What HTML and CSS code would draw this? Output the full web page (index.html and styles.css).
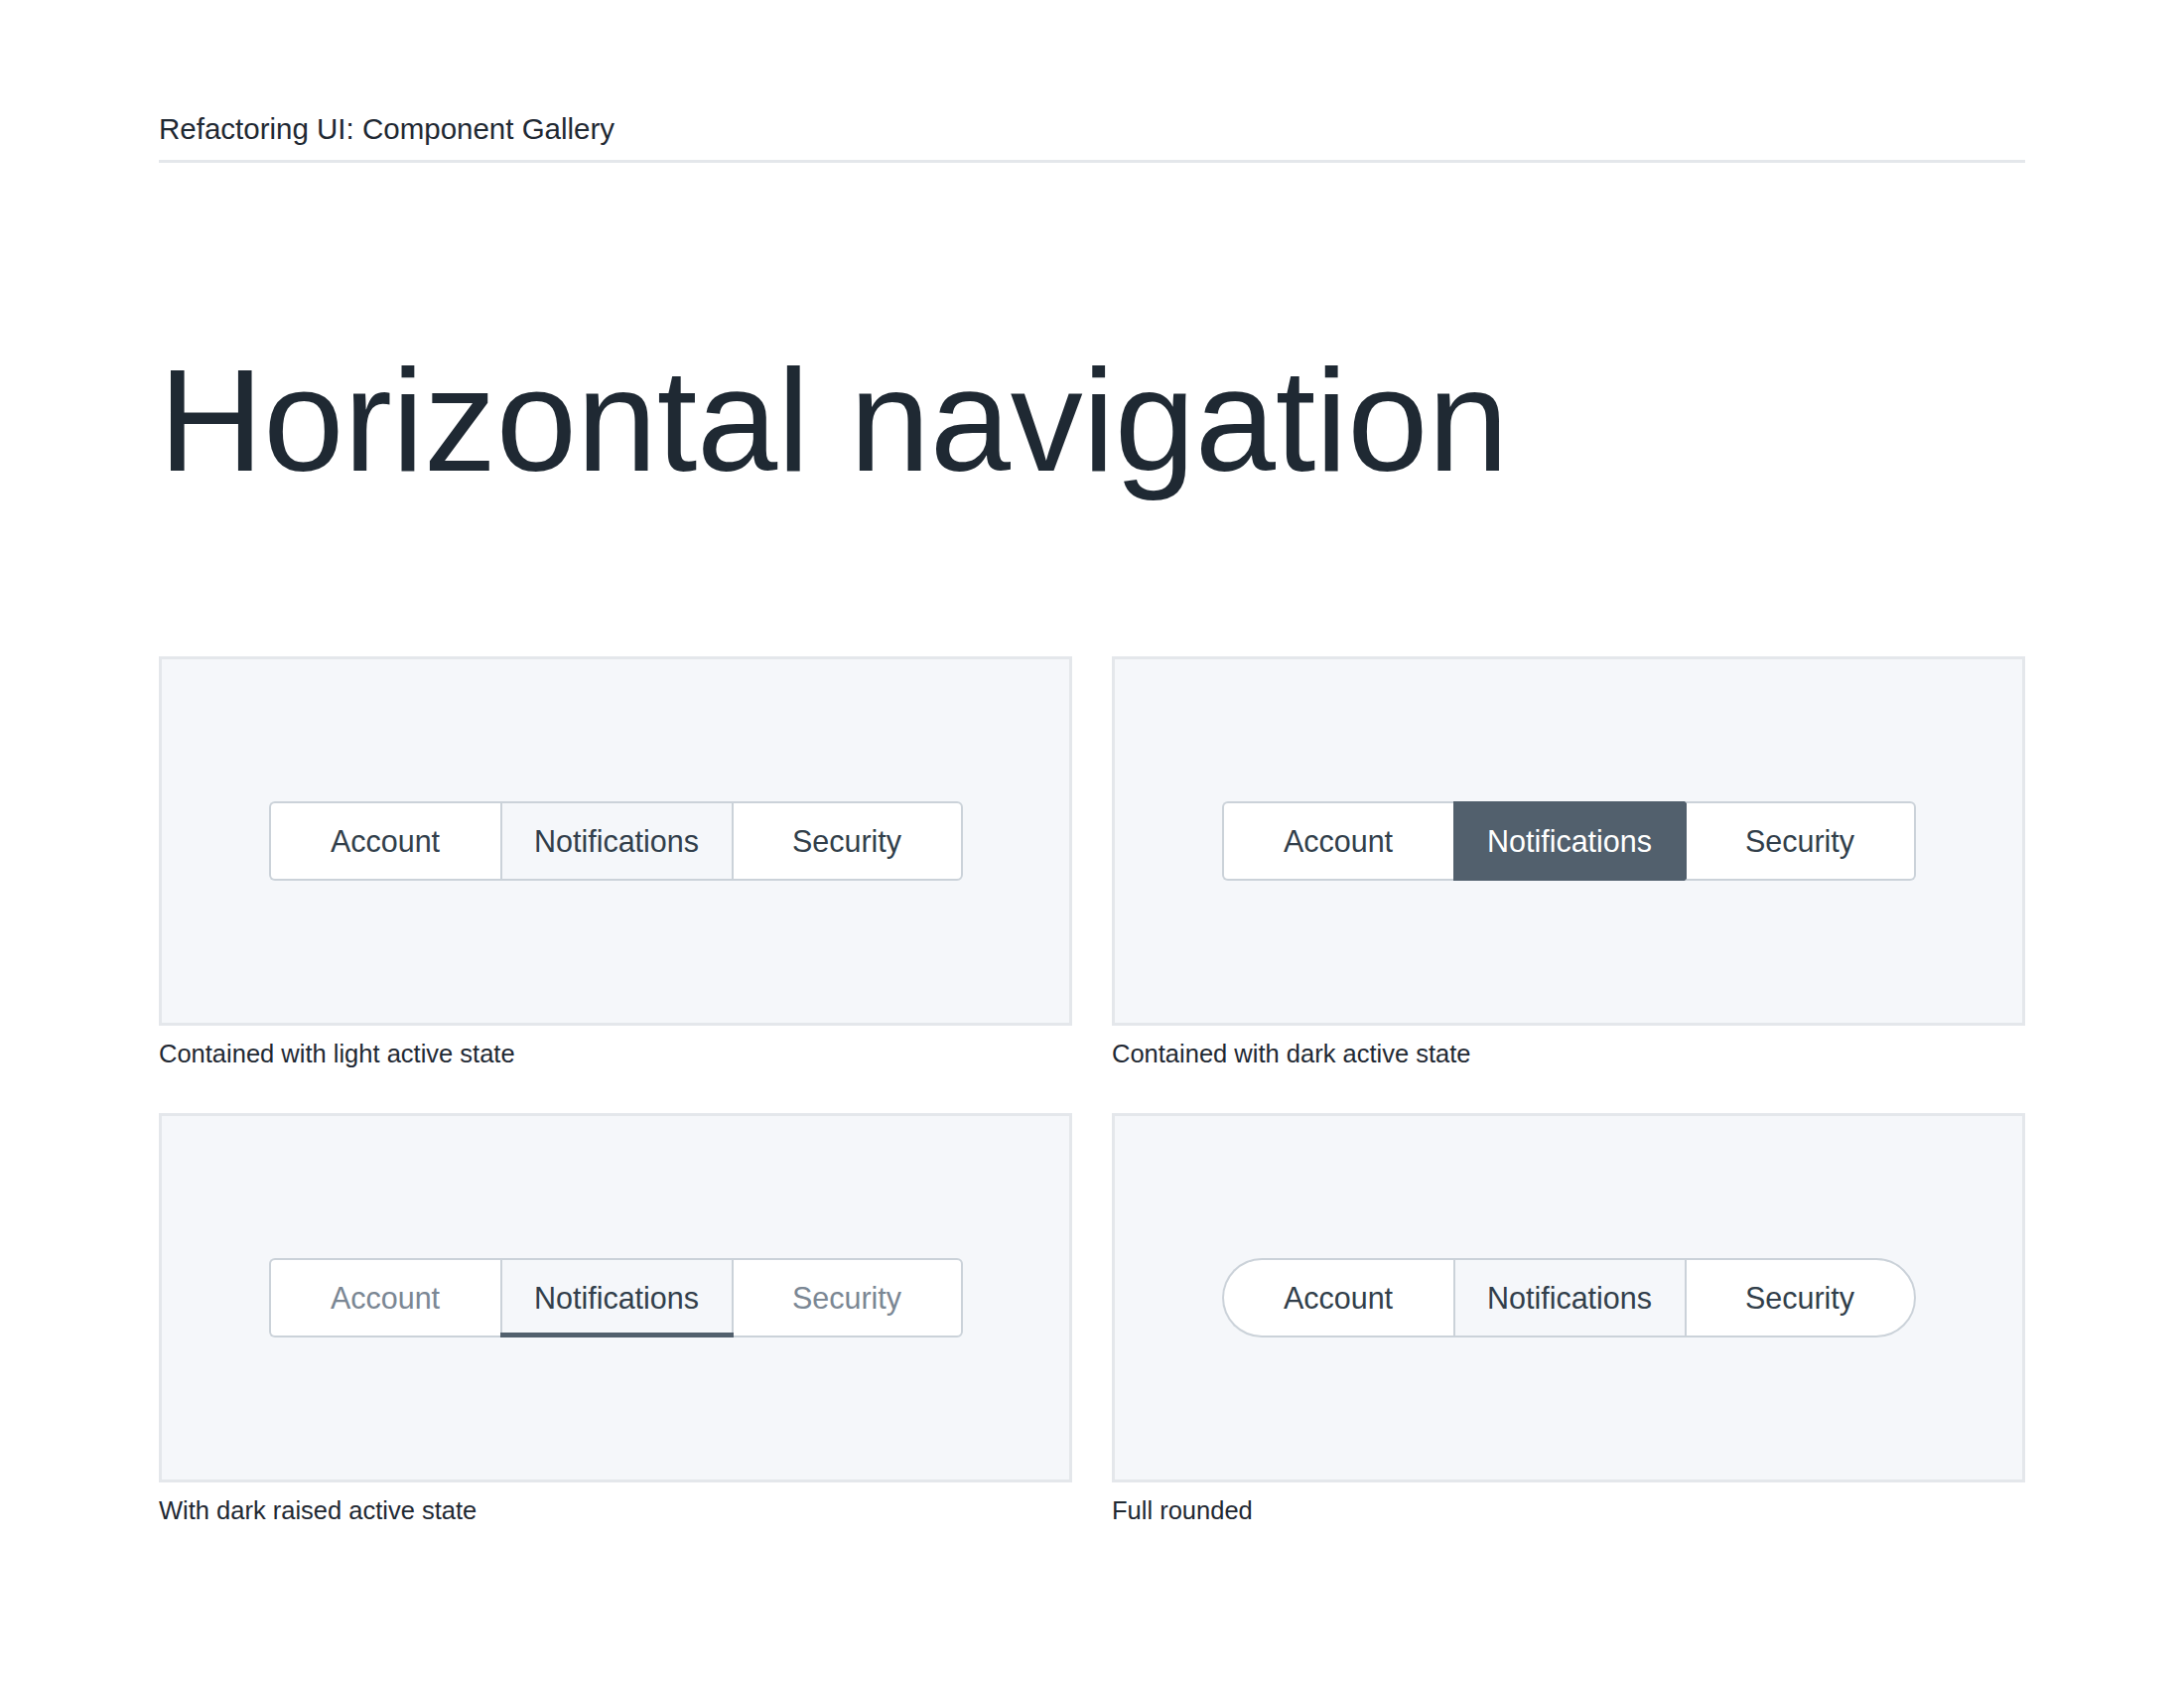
FILE: index.html
```html
<!DOCTYPE html>
<html>
<head>
  <title>Horizontal navigation</title>
  <link rel="stylesheet" href="styles.css">
</head>
<body>
  <div class="page">
    <div class="site-header">Refactoring UI: Component Gallery</div>
    <h1>Horizontal navigation</h1>

    <div class="gallery">
      <div class="example">
        <div class="stage">
          <nav class="tabs tabs-light">
            <a class="tab">Account</a>
            <a class="tab active">Notifications</a>
            <a class="tab">Security</a>
          </nav>
        </div>
        <p class="caption">Contained with light active state</p>
      </div>

      <div class="example">
        <div class="stage">
          <nav class="tabs tabs-dark">
            <a class="tab">Account</a>
            <a class="tab active">Notifications</a>
            <a class="tab">Security</a>
          </nav>
        </div>
        <p class="caption">Contained with dark active state</p>
      </div>

      <div class="example">
        <div class="stage">
          <nav class="tabs tabs-raised">
            <a class="tab">Account</a>
            <a class="tab active">Notifications</a>
            <a class="tab">Security</a>
          </nav>
        </div>
        <p class="caption">With dark raised active state</p>
      </div>

      <div class="example">
        <div class="stage">
          <nav class="tabs tabs-light tabs-round">
            <a class="tab">Account</a>
            <a class="tab active">Notifications</a>
            <a class="tab">Security</a>
          </nav>
        </div>
        <p class="caption">Full rounded</p>
      </div>
    </div>
  </div>
</body>
</html>
```

FILE: styles.css
```css
body {
  margin: 0;
  font-family: "Liberation Sans", Arial, sans-serif;
  color: #1f2933;
  background: #fff;
}

.page {
  padding: 113px 160px 0;
}

.site-header {
  font-size: 29.5px;
  line-height: 34px;
  padding-bottom: 14px;
  border-bottom: 3px solid #e4e7eb;
}

h1 {
  margin: 187px 0 0;
  font-size: 146px;
  font-weight: normal;
  line-height: 1;
  letter-spacing: -0.2px;
  color: #1f2933;
}

.gallery {
  margin-top: 164px;
  display: grid;
  grid-template-columns: 1fr 1fr;
  column-gap: 40px;
  row-gap: 45px;
}

.stage {
  height: 372px;
  box-sizing: border-box;
  border: 3px solid #e4e7eb;
  background: #f5f7fa;
  display: flex;
  align-items: center;
  justify-content: center;
}

.caption {
  margin: 13px 0 0;
  font-size: 25.5px;
  line-height: 30px;
  color: #1f2933;
}

/* tabs */
.tabs {
  display: flex;
}

.tab {
  width: 233px;
  height: 80px;
  box-sizing: border-box;
  display: flex;
  align-items: center;
  justify-content: center;
  font-size: 30.5px;
  color: #323f4b;
  background: #fff;
  border: 2px solid #cbd2d9;
  border-right: none;
  cursor: pointer;
}

.tab:first-child {
  border-radius: 6px 0 0 6px;
}

.tab:last-child {
  border-right: 2px solid #cbd2d9;
  border-radius: 0 6px 6px 0;
}

.tabs-light .active {
  background: #f5f7fa;
}

.tabs-dark .active {
  background: #52606d;
  border-color: #52606d;
  color: #fff;
}

.tabs-dark .active + .tab {
  border-left-color: #52606d;
}

.tabs-raised .tab {
  color: #7b8794;
}

.tabs-raised .active {
  color: #323f4b;
  background: #f5f7fa;
  position: relative;
}

.tabs-raised .active::after {
  content: "";
  position: absolute;
  left: -2px;
  right: -2px;
  bottom: -2px;
  height: 5px;
  background: #52606d;
}

.tabs-round .tab:first-child {
  border-radius: 40px 0 0 40px;
}

.tabs-round .tab:last-child {
  border-radius: 0 40px 40px 0;
}
```
